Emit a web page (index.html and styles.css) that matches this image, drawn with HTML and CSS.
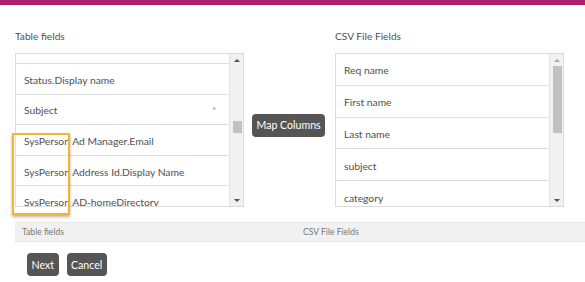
FILE: index.html
```html
<!DOCTYPE html>
<html>
<head>
<meta charset="utf-8">
<link rel="stylesheet" href="styles.css">
</head>
<body>
<div class="topbar"></div>
<div class="page">
  <div class="mapper">
    <div class="col">
      <div class="label">Table fields</div>
      <div class="listbox">
        <ul class="items left">
          <li class="cut"></li>
          <li>Status.Display name</li>
          <li>Subject<span class="req">*</span></li>
          <li>SysPerson Ad Manager.Email</li>
          <li>SysPerson Address Id.Display Name</li>
          <li>SysPerson AD-homeDirectory</li>
        </ul>
        <div class="sb">
          <span class="arrow up"></span>
          <div class="track"><div class="thumb thumb-left"></div></div>
          <span class="arrow down"></span>
        </div>
      </div>
    </div>
    <div class="mid"><button class="btn">Map Columns</button></div>
    <div class="col">
      <div class="label">CSV File Fields</div>
      <div class="listbox">
        <ul class="items right">
          <li>Req name</li>
          <li>First name</li>
          <li>Last name</li>
          <li>subject</li>
          <li>category</li>
        </ul>
        <div class="sb">
          <span class="arrow up disabled"></span>
          <div class="track"><div class="thumb thumb-right"></div></div>
          <span class="arrow down"></span>
        </div>
      </div>
    </div>
  </div>
  <div class="headerbar"><span class="h1">Table fields</span><span class="h2">CSV File Fields</span></div>
  <div class="actions"><button class="btn">Next</button><button class="btn">Cancel</button></div>
</div>
<div class="highlight"></div>
</body>
</html>
```

FILE: styles.css
```css
html, body {
  margin: 0;
  padding: 0;
  background: #fff;
  font-family: Lato, "Open Sans", sans-serif;
  color: #505050;
}
.topbar {
  height: 5px;
  background: #ab1f6c;
}
.page {
  padding: 23px 0 0 15px;
}
.mapper {
  display: flex;
  align-items: flex-start;
}
.col {
  width: 229px;
  display: flex;
  flex-direction: column;
}
.label {
  font-size: 10.2px;
  line-height: 16px;
  height: 16px;
  margin-bottom: 9px;
  color: #505050;
}
.listbox {
  height: 154px;
  box-sizing: border-box;
  border: 1px solid #dcdcdc;
  display: flex;
  overflow: hidden;
}
.items {
  list-style: none;
  margin: 0;
  padding: 0;
  flex: 1;
  overflow: hidden;
  border-right: 1px solid #e4e4e4;
}
.items li {
  box-sizing: border-box;
  border-bottom: 1px solid #dedede;
  padding: 0 0 0 8px;
  font-size: 10.3px;
  display: flex;
  align-items: center;
  position: relative;
  white-space: nowrap;
}
.items.left li {
  height: 30.6px;
  padding-top: 2px;
}
.items.left li.cut {
  height: 10px;
}
.items.right li {
  height: 31.8px;
  padding-top: 2px;
}
.req {
  margin-left: auto;
  margin-right: 13px;
  font-size: 9px;
  color: #888;
}
.sb {
  width: 13px;
  background: #f1f1f1;
  display: flex;
  flex-direction: column;
  align-items: center;
}
.arrow {
  height: 12px;
  width: 13px;
  display: flex;
  align-items: center;
  justify-content: center;
  flex: none;
}
.arrow::before {
  content: "";
  width: 0;
  height: 0;
  border-left: 3px solid transparent;
  border-right: 3px solid transparent;
}
.arrow.up::before {
  border-bottom: 3px solid #505050;
}
.arrow.up.disabled::before {
  border-bottom-color: #a8a8a8;
}
.arrow.down::before {
  border-top: 3px solid #505050;
}
.track {
  flex: 1;
  width: 9px;
  margin-left: 1px;
}
.thumb {
  background: #c1c1c1;
  width: 9px;
}
.thumb-left {
  margin-top: 55px;
  height: 12px;
}
.thumb-right {
  margin-top: 0;
  height: 67px;
}
.mid {
  width: 91px;
  box-sizing: border-box;
  padding: 85px 0 0 8px;
}
.btn {
  background: #555;
  color: #fff;
  border: none;
  border-radius: 4px;
  font-family: Lato, "Open Sans", sans-serif;
  font-size: 10.6px;
  height: 23px;
  padding: 0 4.5px;
  cursor: pointer;
}
.headerbar {
  margin-top: 15px;
  height: 20px;
  box-sizing: border-box;
  background: #f1f1f1;
  border-top: 1px solid #e6e6e6;
  border-bottom: 1px solid #e6e6e6;
  display: flex;
  align-items: center;
  font-size: 8.6px;
  color: #777;
}
.h1 {
  width: 281px;
  padding-left: 7px;
}
.actions {
  margin-top: 11px;
  padding-left: 12px;
  display: flex;
  gap: 8px;
}
.highlight {
  position: absolute;
  left: 12px;
  top: 133px;
  width: 58px;
  height: 82px;
  box-sizing: border-box;
  border: 2px solid #f2b52d;
  box-shadow: 0 2px 3px rgba(0, 0, 0, 0.3);
}
```
